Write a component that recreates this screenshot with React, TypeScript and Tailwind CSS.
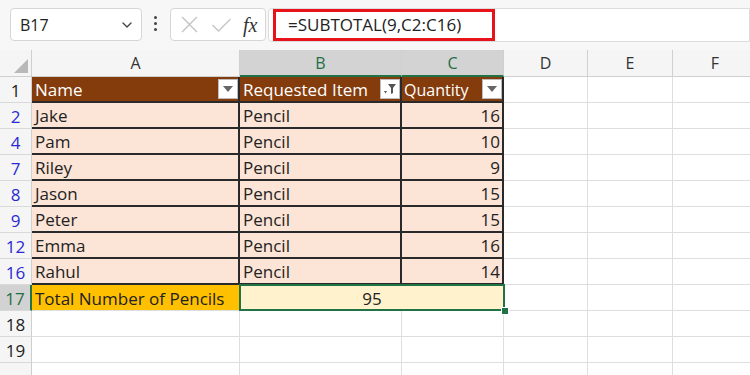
import { ChevronDown } from "lucide-react";

const W = [32, 208, 162, 102, 84, 85, 85, 40];

const rows = [
  { n: 2, name: "Jake", qty: 16 },
  { n: 4, name: "Pam", qty: 10 },
  { n: 7, name: "Riley", qty: 9 },
  { n: 8, name: "Jason", qty: 15 },
  { n: 9, name: "Peter", qty: 15 },
  { n: 12, name: "Emma", qty: 16 },
  { n: 16, name: "Rahul", qty: 14 },
];

function FilterBtn({ funnel }: { funnel?: boolean }) {
  return (
    <div className="ml-auto flex h-[20px] w-[20px] shrink-0 items-center justify-center border border-[#bdbdbd] bg-white">
      {funnel ? (
        <svg width="14" height="12" viewBox="0 0 14 12">
          <path d="M1 8 L4 8 L2.5 10.5 Z" fill="#555" />
          <path d="M5 1 L13 1 L10 5 L10 10 L8 11 L8 5 Z" fill="#555" />
        </svg>
      ) : (
        <svg width="10" height="6" viewBox="0 0 10 6">
          <path d="M0 0 L10 0 L5 6 Z" fill="#666" />
        </svg>
      )}
    </div>
  );
}

function RowHead({ n, blue, sel }: { n: number; blue?: boolean; sel?: boolean }) {
  return (
    <div
      className={`flex h-full shrink-0 items-center justify-center pt-[2px] border-b border-[#d9d9d9] ${
        sel
          ? "border-r-2 border-r-[#217346] bg-[#d2d2d2] text-[#1f6e45]"
          : "border-r border-r-[#cfcfcf] bg-[#f5f5f5]"
      } ${blue ? "text-[#2a2ad4]" : sel ? "" : "text-[#222]"}`}
      style={{ width: W[0] }}
    >
      {n}
    </div>
  );
}

function Empty({ i }: { i: number }) {
  return (
    <div
      className="h-full shrink-0 border-r border-b border-[#dedede]"
      style={{ width: W[i] }}
    />
  );
}

function Tail() {
  return (
    <>
      <Empty i={4} />
      <Empty i={5} />
      <Empty i={6} />
      <Empty i={7} />
    </>
  );
}

export default function App() {
  return (
    <div
      className="relative h-[375px] w-[750px] overflow-hidden bg-white text-[17px] text-[#222]"
      style={{ fontFamily: "'Open Sans', 'Noto Sans', sans-serif" }}
    >
      {/* formula bar */}
      <div className="flex h-[50px] items-start bg-[#f7f7f7] pt-[8px]">
        <div className="ml-[10px] flex h-[33px] w-[132px] items-center rounded-[4px] border border-[#d6d6d6] bg-white pr-[6px] pl-[9px]">
          <span className="text-[16px]">B17</span>
          <ChevronDown size={16} className="ml-auto text-[#444]" strokeWidth={2} />
        </div>
        <div className="mr-[13px] ml-[12px] mt-[8px] flex flex-col gap-[3px]">
          <div className="h-[3px] w-[3px] rounded-full bg-[#444]" />
          <div className="h-[3px] w-[3px] rounded-full bg-[#444]" />
          <div className="h-[3px] w-[3px] rounded-full bg-[#444]" />
        </div>
        <div className="flex h-[33px] w-[96px] items-center rounded-[4px] border border-[#d6d6d6] bg-white pl-[8px]">
          <svg width="17" height="17" viewBox="0 0 16 16" className="ml-[2px]">
            <path d="M1 1 L15 15 M15 1 L1 15" stroke="#c4c4c4" strokeWidth="1.3" />
          </svg>
          <svg width="21" height="16" viewBox="0 0 20 16" className="ml-[13px]">
            <path d="M1 8 L7 14 L19 2" stroke="#c4c4c4" strokeWidth="1.3" fill="none" />
          </svg>
          <span
            className="ml-[11px] text-[20px] italic text-[#333]"
            style={{ fontFamily: "'Liberation Serif', serif" }}
          >
            fx
          </span>
        </div>
        <div className="ml-[2px] flex h-[34px] flex-1 items-stretch rounded-l-[4px] border border-[#dcdcdc] bg-white pl-[4px]">
          <div className="flex w-[222px] items-center border-[3px] border-[#e8121b] pl-[12px]">
            <span className="text-[17px]">=SUBTOTAL(9,C2:C16)</span>
          </div>
        </div>
      </div>

      {/* column headers */}
      <div className="flex h-[27px] text-[16px]">
        <div
          className="relative h-full shrink-0 border-r border-b border-[#cfcfcf] bg-[#f5f5f5]"
          style={{ width: W[0] }}
        >
          <svg width="14" height="14" viewBox="0 0 14 14" className="absolute right-[3px] bottom-[3px]">
            <path d="M14 0 L14 14 L0 14 Z" fill="#b8b8b8" />
          </svg>
        </div>
        {["A", "B", "C", "D", "E", "F", ""].map((c, i) => {
          const sel = c === "B" || c === "C";
          return (
            <div
              key={i}
              className={`flex h-full shrink-0 items-center justify-center border-r border-[#cfcfcf] ${
                sel
                  ? "border-b-2 border-b-[#217346] bg-[#d3d3d3] text-[#1f6e45]"
                  : "border-b border-b-[#cfcfcf] bg-[#f5f5f5] text-[#333]"
              }`}
              style={{ width: W[i + 1] }}
            >
              {c}
            </div>
          );
        })}
      </div>

      {/* row 1 header */}
      <div className="flex h-[26px]">
        <RowHead n={1} />
        <div
          className="flex h-full shrink-0 items-center border-r-2 border-b-2 border-[#2a2a2a] bg-[#843c0c] pl-[3px] text-white"
          style={{ width: W[1] }}
        >
          <span className="pt-[2px]">Name</span>
          <FilterBtn />
        </div>
        <div
          className="flex h-full shrink-0 items-center border-r-2 border-b-2 border-[#2a2a2a] bg-[#843c0c] pl-[3px] text-white"
          style={{ width: W[2] }}
        >
          <span className="pt-[2px]">Requested Item</span>
          <FilterBtn funnel />
        </div>
        <div
          className="flex h-full shrink-0 items-center border-r-2 border-b-2 border-[#2a2a2a] bg-[#843c0c] pl-[2px] text-white"
          style={{ width: W[3] }}
        >
          <span className="pt-[2px] text-[16px]">Quantity</span>
          <FilterBtn />
        </div>
        <Tail />
      </div>

      {rows.map((r) => (
        <div key={r.n} className="flex h-[26px]">
          <RowHead n={r.n} blue />
          <div
            className="flex h-full shrink-0 items-center border-r-2 border-b-2 border-[#2a2a2a] bg-[#fce4d6] pt-[2px] pl-[3px]"
            style={{ width: W[1] }}
          >
            {r.name}
          </div>
          <div
            className="flex h-full shrink-0 items-center border-r-2 border-b-2 border-[#2a2a2a] bg-[#fce4d6] pt-[2px] pl-[3px]"
            style={{ width: W[2] }}
          >
            Pencil
          </div>
          <div
            className="flex h-full shrink-0 items-center justify-end border-r-2 border-b-2 border-[#2a2a2a] bg-[#fce4d6] pt-[2px] pr-[2px]"
            style={{ width: W[3] }}
          >
            {r.qty}
          </div>
          <Tail />
        </div>
      ))}

      {/* total row */}
      <div className="flex h-[26px]">
        <RowHead n={17} sel />
        <div
          className="flex h-full shrink-0 items-center border-b border-[#dedede] bg-[#ffc000] pt-[2px] pl-[3px]"
          style={{ width: W[1] }}
        >
          Total Number of Pencils
        </div>
        <div
          className="relative flex h-full shrink-0 items-center justify-center bg-[#fff2cc] pt-[2px]"
          style={{ width: W[2] + W[3] }}
        >
          <div className="absolute -top-[1px] -right-[1px] bottom-0 -left-[1px] border-2 border-[#217346]" />
          <div className="absolute -right-[5px] -bottom-[4px] h-[8px] w-[8px] border border-white bg-[#217346]" />
          <span className="relative">95</span>
        </div>
        <Tail />
      </div>

      {[18, 19].map((n) => (
        <div key={n} className="flex h-[26px]">
          <RowHead n={n} />
          <Empty i={1} />
          <Empty i={2} />
          <Empty i={3} />
          <Tail />
        </div>
      ))}
      <div className="flex h-[26px]">
        <div
          className="h-full shrink-0 border-r border-[#cfcfcf] bg-[#f5f5f5]"
          style={{ width: W[0] }}
        />
        <Empty i={1} />
        <Empty i={2} />
        <Empty i={3} />
        <Tail />
      </div>
    </div>
  );
}
